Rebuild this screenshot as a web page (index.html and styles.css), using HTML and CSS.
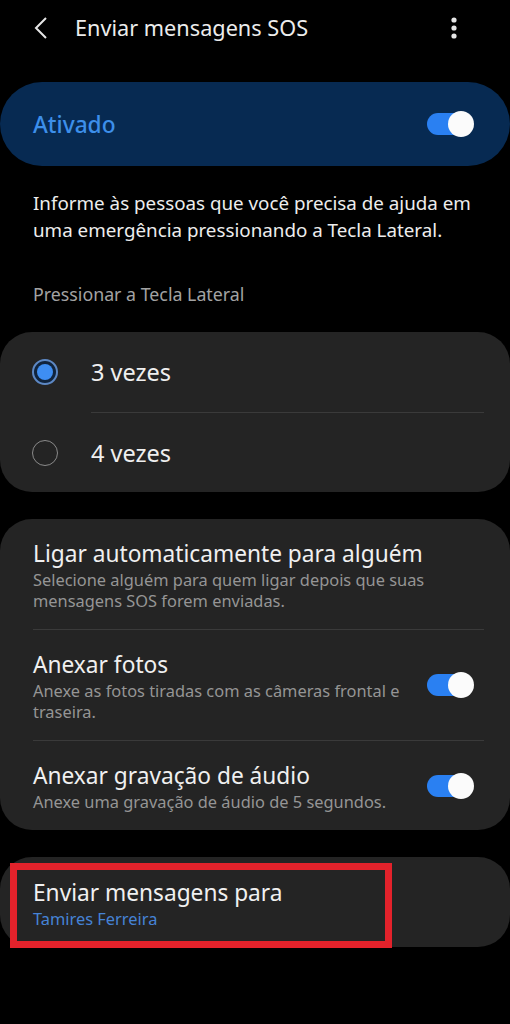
FILE: index.html
```html
<!DOCTYPE html>
<html lang="pt">
<head>
<meta charset="utf-8">
<link rel="stylesheet" href="styles.css">
</head>
<body>
<div class="screen">
  <header class="topbar">
    <svg class="back" width="14" height="22" viewBox="0 0 14 22"><path d="M12 1 L2 11 L12 21" fill="none" stroke="#e6e6e6" stroke-width="2"/></svg>
    <h1 class="title">Enviar mensagens SOS</h1>
    <svg class="more" width="8" height="22" viewBox="0 0 8 22"><circle cx="4" cy="3" r="2.6" fill="#e6e6e6"/><circle cx="4" cy="11" r="2.6" fill="#e6e6e6"/><circle cx="4" cy="19" r="2.6" fill="#e6e6e6"/></svg>
  </header>

  <section class="master">
    <span class="master-label">Ativado</span>
    <span class="switch"><span class="knob"></span></span>
  </section>

  <p class="desc">Informe às pessoas que você precisa de ajuda em uma emergência pressionando a Tecla Lateral.</p>

  <p class="section-label">Pressionar a Tecla Lateral</p>

  <section class="card radios">
    <div class="radio-row">
      <span class="radio checked"><span class="dot"></span></span>
      <span class="radio-text">3 vezes</span>
    </div>
    <div class="radio-row">
      <span class="radio"></span>
      <span class="radio-text">4 vezes</span>
    </div>
  </section>

  <section class="card list">
    <div class="item">
      <div class="item-text">
        <div class="item-title">Ligar automaticamente para alguém</div>
        <div class="item-sub">Selecione alguém para quem ligar depois que suas mensagens SOS forem enviadas.</div>
      </div>
    </div>
    <div class="item">
      <div class="item-text">
        <div class="item-title">Anexar fotos</div>
        <div class="item-sub">Anexe as fotos tiradas com as câmeras frontal e traseira.</div>
      </div>
      <span class="switch"><span class="knob"></span></span>
    </div>
    <div class="item last">
      <div class="item-text">
        <div class="item-title">Anexar gravação de áudio</div>
        <div class="item-sub">Anexe uma gravação de áudio de 5 segundos.</div>
      </div>
      <span class="switch"><span class="knob"></span></span>
    </div>
  </section>

  <section class="card send">
    <div class="item-title">Enviar mensagens para</div>
    <div class="item-sub blue">Tamires Ferreira</div>
    <div class="highlight"></div>
  </section>
</div>
</body>
</html>
```

FILE: styles.css
```css
* { box-sizing: border-box; }
html, body { margin: 0; padding: 0; background: #000; }
body {
  font-family: "Noto Sans", Roboto, "Liberation Sans", sans-serif;
  color: #f0f0f0;
  width: 510px;
  height: 1024px;
  overflow: hidden;
}
.screen { display: flex; flex-direction: column; }

.topbar {
  height: 56px;
  display: flex;
  align-items: center;
  padding: 0 0 0 34px;
}
.back { flex: none; margin-right: 27px; }
.title {
  margin: 0;
  font-size: 21.7px;
  line-height: 26px;
  font-weight: 400;
  color: #ececec;
  flex: 1;
}
.more { flex: none; margin-right: 52px; }

.master {
  margin-top: 26px;
  height: 84px;
  border-radius: 42px;
  background: #072a52;
  display: flex;
  align-items: center;
  justify-content: space-between;
  padding: 0 36px 0 33px;
}
.master-label { font-size: 22.7px; color: #3d8fea; font-weight: 500; }

.switch {
  flex: none;
  position: relative;
  width: 47px;
  height: 26px;
  display: block;
}
.switch::before {
  content: "";
  position: absolute;
  left: 0; top: 2px;
  width: 40px; height: 22px;
  border-radius: 11px;
  background: #2a80f2;
}
.knob {
  position: absolute;
  right: 0; top: 0;
  width: 26px; height: 26px;
  border-radius: 50%;
  background: #fbfbfb;
}

.desc {
  margin: 24px 0 0;
  padding: 0 33px;
  font-size: 18.8px;
  line-height: 27px;
  color: #ededed;
}
.section-label {
  margin: 40px 0 0;
  padding: 0 33px;
  font-size: 17.8px;
  line-height: 20px;
  color: #a3a3a3;
}

.card {
  background: #242424;
  border-radius: 32px;
}
.radios { margin-top: 28px; }
.radio-row {
  height: 80px;
  display: flex;
  align-items: center;
  padding-left: 32px;
}
.radio-row + .radio-row { border-top: 1px solid #3a3a3a; margin-left: 91px; padding-left: 0; margin-right: 26px; }
.radio-row + .radio-row .radio { margin-left: -59px; }
.radio {
  flex: none;
  width: 26px; height: 26px;
  border-radius: 50%;
  border: 1.5px solid #8a8a8a;
  display: flex;
  align-items: center;
  justify-content: center;
  margin-right: 33px;
}
.radio.checked { border: 2px solid #5d88c4; background: #10243d; }
.dot { width: 16px; height: 16px; border-radius: 50%; background: #3e8ef2; }
.radio-text { font-size: 23.5px; color: #efefef; }

.list { margin-top: 27px; padding: 0 26px 0 33px; }
.item {
  display: flex;
  align-items: center;
  padding: 22px 0 18px;
  border-bottom: 1px solid #3a3a3a;
}
.item.last { border-bottom: none; padding-bottom: 17px; }
.item-text { flex: 1; padding-right: 16px; }
.item-title { font-size: 22.7px; line-height: 26px; color: #f0f0f0; }
.item-sub { font-size: 16.4px; line-height: 20.5px; color: #959595; margin-top: 3px; }
.item-sub.blue { color: #4683d6; }
.list .switch { margin-right: 10px; margin-top: -4px; }

.send {
  position: relative;
  margin-top: 27px;
  padding: 23px 33px 18px;
}
.highlight {
  position: absolute;
  left: 10px; top: 6px;
  width: 382px; height: 85px;
  border: 7px solid #e3222b;
}
```
